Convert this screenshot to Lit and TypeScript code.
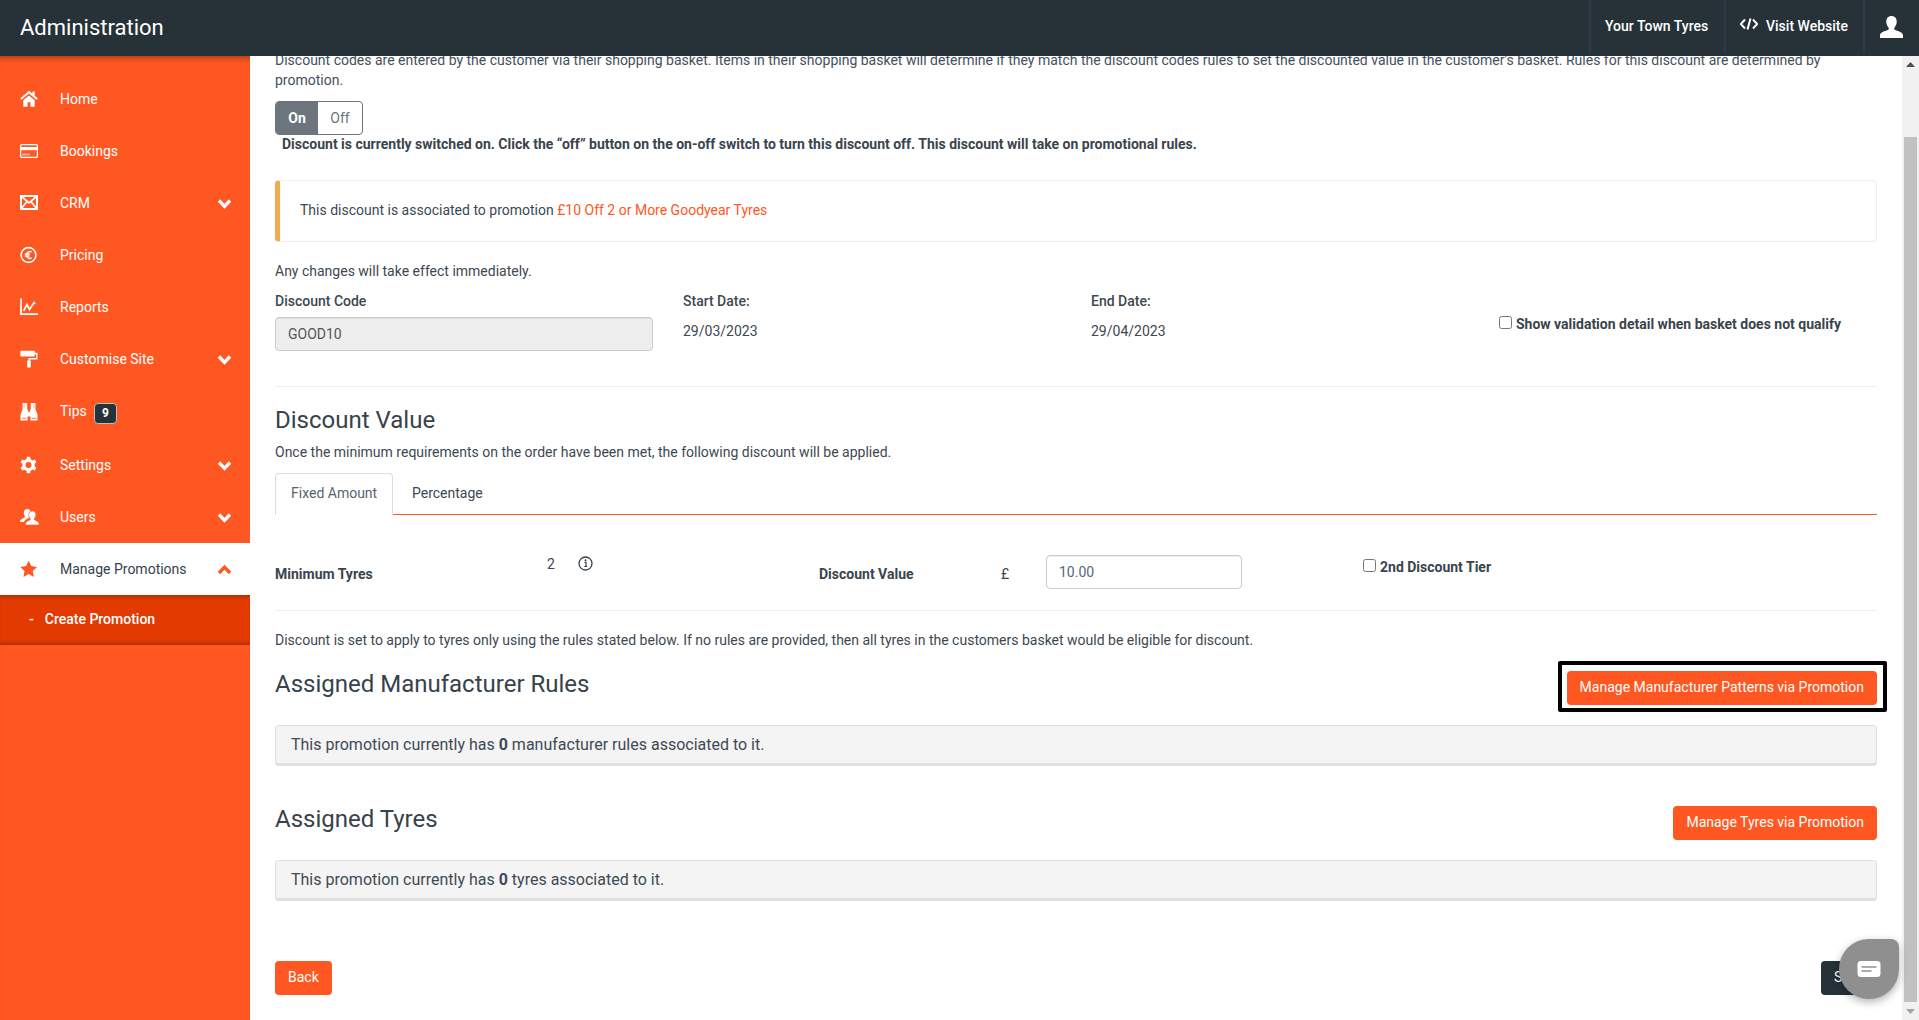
import { LitElement, html, css, svg } from "lit";
import { customElement } from "lit/decorators.js";

const W = "#fff";
const icons: Record<string, unknown> = {
  home: svg`<path fill="${W}" d="M9 .8.3 8.3l1.3 1.500L9 3.500l7.400 6.300 1.300-1.500-3-2.600V1.500h-2.200v1.900z"/><path fill="${W}" d="M3.300 10.200 9 5.400l5.700 4.800v6.600h-4.300v-4.500H7.600v4.500H3.300z"/>`,
  card: svg`<rect x=".6" y="2.600" width="16.800" height="12.800" rx="1.400" fill="none" stroke="${W}" stroke-width="1.200"/><rect x="1" y="5" width="16" height="3.200" fill="${W}"/><path fill="${W}" d="M2.500 11.500h1v2h-1zm2 0h1v2h-1zm2 0h1v2h-1zm2 0h1v2h-1z"/>`,
  crm: svg`<rect x="1" y="2" width="16" height="13" fill="none" stroke="${W}" stroke-width="2"/><path d="M1.500 2.500 9 9l7.500-6.500M1.500 14.500 7 7.500M16.500 14.500 11 7.500" fill="none" stroke="${W}" stroke-width="1.700"/>`,
  euro: svg`<circle cx="8.500" cy="9" r="7.400" fill="none" stroke="${W}" stroke-width="1.600"/><path d="M11.500 6.200a3.300 3.300 0 1 0 0 5.600M4.800 8h5M4.800 10h4.600" fill="none" stroke="${W}" stroke-width="1.400"/>`,
  chart: svg`<path d="M1 .5V16.200H18" fill="none" stroke="${W}" stroke-width="1.700"/><path d="M3.500 13 7 6.500l2.500 5L14 4.500l1 1.600" fill="none" stroke="${W}" stroke-width="1.700"/>`,
  roller: svg`<rect x=".3" y=".8" width="14.500" height="5.600" rx="1" fill="${W}"/><path d="M14.500 3.500h2.300v5.300H9.200V11" fill="none" stroke="${W}" stroke-width="1.400"/><rect x="7.200" y="10.500" width="3.600" height="7" rx=".5" fill="${W}"/>`,
  binoculars: svg`<path fill="${W}" d="M2.500 0h4.700v6.500H8v2.200h2V6.500h.8V0h4.700v6.500l2 5v6h-7v-4H7.500v4h-7v-6l2-5z"/><path d="M1.700 15.300h4.600M11.700 15.300h4.600" stroke="#ff5722" stroke-width=".8"/><path d="M4 1.500v4M14 1.500v4" stroke="#ff5722" stroke-width=".5"/>`,
  gear: svg`<g fill="${W}"><circle cx="8.500" cy="9" r="6.200"/><rect x="6.700" y=".8" width="3.600" height="16.400" rx=".6"/><rect x="6.700" y=".8" width="3.600" height="16.400" rx=".6" transform="rotate(60 8.500 9)"/><rect x="6.700" y=".8" width="3.600" height="16.400" rx=".6" transform="rotate(120 8.500 9)"/></g><circle cx="8.500" cy="9" r="3" fill="#ff5722"/>`,
  users: svg`<path fill="${W}" d="M7.500 1c2 0 3 1.300 3 3.400 0 1.600-.7 3-1.700 4l-.1 1.500c-2.400 1-4.200 2.200-4.700 4.100H0v-.7c0-2 3.600-3 4.800-4.100V7.800C4 7 3.700 5.600 3.900 4.200 4.200 2.200 5.500 1 7.500 1z"/><path fill="${W}" d="M12.500 3c2.200 0 3.300 1.500 3.300 3.700 0 1.500-.6 3-1.500 3.800v1.200c1.200 1 4.700 1.800 4.700 3.600V17H5.500v-1.700c0-1.800 3.500-2.600 4.700-3.600v-1.200c-.9-.8-1.500-2.300-1.500-3.800C8.700 4.500 10.300 3 12.500 3z" stroke="#ff5722" stroke-width=".6"/>`,
  star: svg`<path fill="#ff5722" d="M8.700.7l2.500 5.400 5.800.8-4.200 4.100 1 5.900-5.100-2.800-5.200 2.800 1-5.900L.3 6.900l5.800-.8z"/>`,
};

const chevron = (up: boolean, color = "#fff") => html`<svg class="chev" viewBox="0 0 15 11"><path d="${up ? "M2 9 7.500 3.200 13 9" : "M2 2.500 7.500 8.300 13 2.500"}" fill="none" stroke="${color}" stroke-width="3.400"/></svg>`;

@customElement("app-root")
export class AppRoot extends LitElement {
  static styles = css`
    :host { display: block; height: 1020px; overflow: hidden; position: relative; font-family: Roboto, "Liberation Sans", sans-serif; font-size: 14px; line-height: 20px; color: #3d4852; background: #fff; }
    * { box-sizing: border-box; }
    .top { height: 56px; background: #263238; color: #fff; display: flex; align-items: flex-start; position: relative; z-index: 2; }
    .brand { font-size: 22px; line-height: 28px; padding: 14px 0 0 20px; flex: 1; }
    .top-cell { height: 54px; border-left: 2px solid #2d3b45; display: flex; align-items: center; font-weight: 500; color: #fff; padding-bottom: 2px; }
    .town { width: 135px; padding-left: 14px; }
    .visit { width: 139px; padding-left: 14px; gap: 8px; }
    .visit svg { width: 18px; height: 12px; margin-top: -4px; }
    .me { width: 56px; padding-left: 15px; }
    .me svg { width: 23px; height: 22px; margin-top: 2px; }

    .body { display: flex; height: 964px; }
    .side { width: 250px; flex: none; background: #ff5722; padding-top: 19px; box-shadow: inset 0 7px 6px -5px rgba(0,0,0,.35); color: #fff; }
    .item { height: 50px; margin-bottom: 2px; display: flex; align-items: center; padding: 0 18px 2px 20px; background: #ff5722; }
    .item.tall { height: 52px; }
    .item.flush { margin-bottom: 0; }
    .item svg.ico { width: 18px; height: 18px; flex: none; margin-right: 22px; overflow: visible; }
    .item .lbl { flex: 1; }
    .item .chev { width: 15px; height: 11px; flex: none; }
    .item.active { background: #fff; color: #37424b; margin: 0; height: 52px; padding-bottom: 0; }
    .badge { display: inline-block; width: 23px; height: 21px; margin-left: 7px; vertical-align: -1px; background: #263238; border: 1px solid #b9c0c4; border-radius: 4px; color: #fff; font-size: 12px; font-weight: 700; line-height: 18px; text-align: center; }
    .sub { height: 50px; background: #e23a00; box-shadow: inset 0 5px 5px -4px rgba(0,0,0,.3), inset 0 -5px 5px -4px rgba(0,0,0,.3); display: flex; align-items: center; padding: 0 0 2px 29px; font-weight: 500; gap: 11px; }

    .main { flex: 1; min-width: 0; padding: 0 25px; overflow: hidden; }
    p { margin: 0; }
    .intro { margin-top: -6px; color: #45505c; }
    .toggle { display: flex; width: 88px; height: 34px; margin-top: 11px; border: 1px solid #6c757d; border-radius: 4px; overflow: hidden; }
    .toggle span { display: flex; align-items: center; justify-content: center; }
    .toggle .on { width: 42px; background: #6c757d; color: #fff; font-weight: 700; }
    .toggle .off { flex: 1; color: #6c757d; }
    .state { margin-top: 0; padding-left: 7px; font-weight: 700; line-height: 18px; color: #3a444d; }
    .callout { margin-top: 27px; height: 62px; padding: 19px 24px 0 20px; border: 1px solid #eee; border-left: 5px solid #f0ad4e; border-radius: 4px; }
    a { color: #ff5722; text-decoration: none; }
    .note { margin-top: 19px; }
    .grid4 { display: grid; grid-template-columns: repeat(4, 378px); column-gap: 30px; margin-top: 10px; border-bottom: 1px solid #eee; height: 96px; }
    b, .b { font-weight: 500; }
    .strong { font-weight: 700; color: #3a444d; }
    .field { display: block; width: 100%; height: 34px; margin-top: 6px; padding: 0 12px; border: 1px solid #ccc; border-radius: 4px; font: 14px Roboto, sans-serif; color: #555; background: #eee; box-shadow: inset 0 1px 1px rgba(0,0,0,.075); }
    .field.white { background: #fff; color: #54677a; margin: 1px 0 0; }
    .date { margin-top: 10px; }
    .chk { display: flex; gap: 4px; align-items: flex-start; font-weight: 700; color: #3a444d; }
    .chk input { margin: 0; width: 13px; height: 13px; flex: none; }
    .grid4 .chk { margin-top: 23px; }
    .grid4 .chk input { margin-top: 2px; }
    h3 { margin: 0; font-size: 24px; line-height: 28px; font-weight: 400; color: #37424b; }
    h3.first { margin-top: 19px; }
    .applied { margin-top: 8px; }
    .tabs { display: flex; margin-top: 11px; border-bottom: 1px solid #ff5722; height: 42px; }
    .tab { height: 42px; padding: 9px 15px 0; border: 1px solid transparent; white-space: nowrap; }
    .tab.sel { width: 118px; border-color: #ddd; border-bottom: 0; border-radius: 4px 4px 0 0; background: #fff; color: #5a646c; }
    .tab.next { padding-left: 18px; }
    .row2 { display: grid; grid-template-columns: 272px 31px 241px 182px 45px 196px 121px 1fr; margin-top: 39px; height: 57px; border-bottom: 1px solid #eee; }
    .mt10 { margin-top: 10px; }
    .info { width: 15px; height: 15px; margin-top: 2px; }
    .row2 .chk { margin-top: 3px; gap: 4px; }
    .row2 .chk input { margin-top: 2px; }
    .lede { margin-top: 19px; }
    .split { display: flex; justify-content: space-between; align-items: flex-start; }
    .split.a { margin-top: 19px; }
    .split.a h3 { padding-top: 1px; }
    .split.t { margin-top: 39px; }
    .btn { display: inline-block; height: 34px; padding: 6px 13px; border-radius: 4px; background: #ff5722; color: #fff; white-space: nowrap; }
    .btn.dark { background: #263238; }
    .split .btn { margin-top: 2px; position: relative; }
    .split.t .btn { margin-top: 1px; }
    .ring::after { content: ""; position: absolute; inset: -10px -10px -7px -9px; border: 4px solid #000; border-radius: 2px; }
    .panel { height: 41px; margin-top: 20px; padding: 7px 15px 0; background: #f4f4f4; border: 1px solid #e0e0e0; border-bottom-width: 3px; border-radius: 4px; font-size: 16px; line-height: 24px; color: #3f4a54; }
    .panel b { font-weight: 700; }
    .foot { display: flex; justify-content: space-between; margin-top: 60px; }

    .bar { width: 17px; flex: none; background: #f1f1f1; display: flex; flex-direction: column; }
    .arrow { height: 17px; flex: none; display: flex; align-items: center; justify-content: center; }
    .arrow svg { width: 9px; height: 5px; }
    .track { flex: 1; padding: 64px 2px 1px; }
    .thumb { height: 100%; background: #c1c1c1; }

    .chat { position: absolute; left: 1839px; top: 939px; width: 60px; height: 60px; border-radius: 50% 8px 50% 50%; background: #8f8f8f; box-shadow: 0 3px 8px rgba(0,0,0,.3); display: flex; align-items: center; justify-content: center; z-index: 3; }
    .chat svg { width: 24px; height: 20px; margin-top: 2px; }
  `;

  private nav(icon: string, label: unknown, opt: { chev?: boolean; tall?: boolean; flush?: boolean } = {}) {
    return html`<div class="item ${opt.tall ? "tall" : ""} ${opt.flush ? "flush" : ""}"><svg class="ico" viewBox="0 0 18 18">${icons[icon]}</svg><span class="lbl">${label}</span>${opt.chev ? chevron(false) : ""}</div>`;
  }

  render() {
    return html`
      <header class="top">
        <div class="brand">Administration</div>
        <div class="top-cell town">Your Town Tyres</div>
        <div class="top-cell visit">
          <svg viewBox="0 0 18 12"><path d="M5 1.500.8 6 5 10.500M13 1.500 17.200 6 13 10.500M10.500.5 7.500 11.500" fill="none" stroke="#fff" stroke-width="2"/></svg>
          Visit Website
        </div>
        <div class="top-cell me">
          <svg viewBox="0 0 23 22"><path fill="#fff" d="M11.500 0c3.400 0 5.200 2.300 5.200 5.700 0 2.300-1 4.600-2.400 6v1.700c1.800 1.300 8.700 2.400 8.700 5.600V22H0v-3c0-3.200 6.900-4.300 8.700-5.600v-1.700c-1.400-1.400-2.400-3.700-2.400-6C6.300 2.300 8.100 0 11.500 0z"/></svg>
        </div>
      </header>
      <div class="body">
        <nav class="side">
          ${this.nav("home", "Home")}
          ${this.nav("card", "Bookings")}
          ${this.nav("crm", "CRM", { chev: true })}
          ${this.nav("euro", "Pricing")}
          ${this.nav("chart", "Reports")}
          ${this.nav("roller", "Customise Site", { chev: true })}
          ${this.nav("binoculars", html`Tips<span class="badge">9</span>`, { tall: true })}
          ${this.nav("gear", "Settings", { chev: true })}
          ${this.nav("users", "Users", { chev: true, flush: true })}
          <div class="item active"><svg class="ico" viewBox="0 0 18 18">${icons.star}</svg><span class="lbl">Manage Promotions</span>${chevron(true, "#ff5722")}</div>
          <div class="sub"><span>-</span><span>Create Promotion</span></div>
        </nav>
        <main class="main">
          <p class="intro">Discount codes are entered by the customer via their shopping basket. Items in their shopping basket will determine if they match the discount codes rules to set the discounted value in the customer's basket. Rules for this discount are determined by promotion.</p>
          <div class="toggle"><span class="on">On</span><span class="off">Off</span></div>
          <p class="state">Discount is currently switched on. Click the “off” button on the on-off switch to turn this discount off. This discount will take on promotional rules.</p>
          <div class="callout">This discount is associated to promotion <a href="#">£10 Off 2 or More Goodyear Tyres</a></div>
          <p class="note">Any changes will take effect immediately.</p>
          <div class="grid4">
            <div><span class="b">Discount Code</span><input class="field" value="GOOD10" disabled /></div>
            <div><span class="b">Start Date:</span><div class="date">29/03/2023</div></div>
            <div><span class="b">End Date:</span><div class="date">29/04/2023</div></div>
            <label class="chk"><input type="checkbox" />Show validation detail when basket does not qualify</label>
          </div>
          <h3 class="first">Discount Value</h3>
          <p class="applied">Once the minimum requirements on the order have been met, the following discount will be applied.</p>
          <div class="tabs"><div class="tab sel">Fixed Amount</div><div class="tab next">Percentage</div></div>
          <div class="row2">
            <div class="strong mt10">Minimum Tyres</div>
            <div>2</div>
            <svg class="info" viewBox="0 0 15 15"><circle cx="7.500" cy="7.500" r="6.500" fill="none" stroke="#37424b" stroke-width="1.300"/><path d="M6.500 6.300h1.500v4M6.200 10.500h3" fill="none" stroke="#37424b" stroke-width="1.200"/><circle cx="7.500" cy="4.300" r="1" fill="#37424b"/></svg>
            <div class="strong mt10">Discount Value</div>
            <div class="mt10">£</div>
            <input class="field white" value="10.00" />
            <div></div>
            <label class="chk"><input type="checkbox" />2nd Discount Tier</label>
          </div>
          <p class="lede">Discount is set to apply to tyres only using the rules stated below. If no rules are provided, then all tyres in the customers basket would be eligible for discount.</p>
          <div class="split a"><h3>Assigned Manufacturer Rules</h3><span class="btn ring">Manage Manufacturer Patterns via Promotion</span></div>
          <div class="panel">This promotion currently has <b>0</b> manufacturer rules associated to it.</div>
          <div class="split t"><h3>Assigned Tyres</h3><span class="btn">Manage Tyres via Promotion</span></div>
          <div class="panel">This promotion currently has <b>0</b> tyres associated to it.</div>
          <div class="foot"><span class="btn">Back</span><span class="btn dark">Save</span></div>
        </main>
        <div class="bar">
          <div class="arrow"><svg viewBox="0 0 9 5"><path d="M4.500 0 9 5H0z" fill="#505050"/></svg></div>
          <div class="track"><div class="thumb"></div></div>
          <div class="arrow"><svg viewBox="0 0 9 5"><path d="M0 0h9L4.500 5z" fill="#a3a3a3"/></svg></div>
        </div>
      </div>
      <div class="chat"><svg viewBox="0 0 24 20"><path fill="#fff" d="M4 1h16a3.500 3.500 0 0 1 3.500 3.500v9A3.500 3.500 0 0 1 20 17H4a3.500 3.500 0 0 1-3.500-3.500v-9A3.500 3.500 0 0 1 4 1z"/><path d="M4.500 7h15M4.500 11h10" stroke="#8f8f8f" stroke-width="1.600" fill="none"/></svg></div>
    `;
  }
}
